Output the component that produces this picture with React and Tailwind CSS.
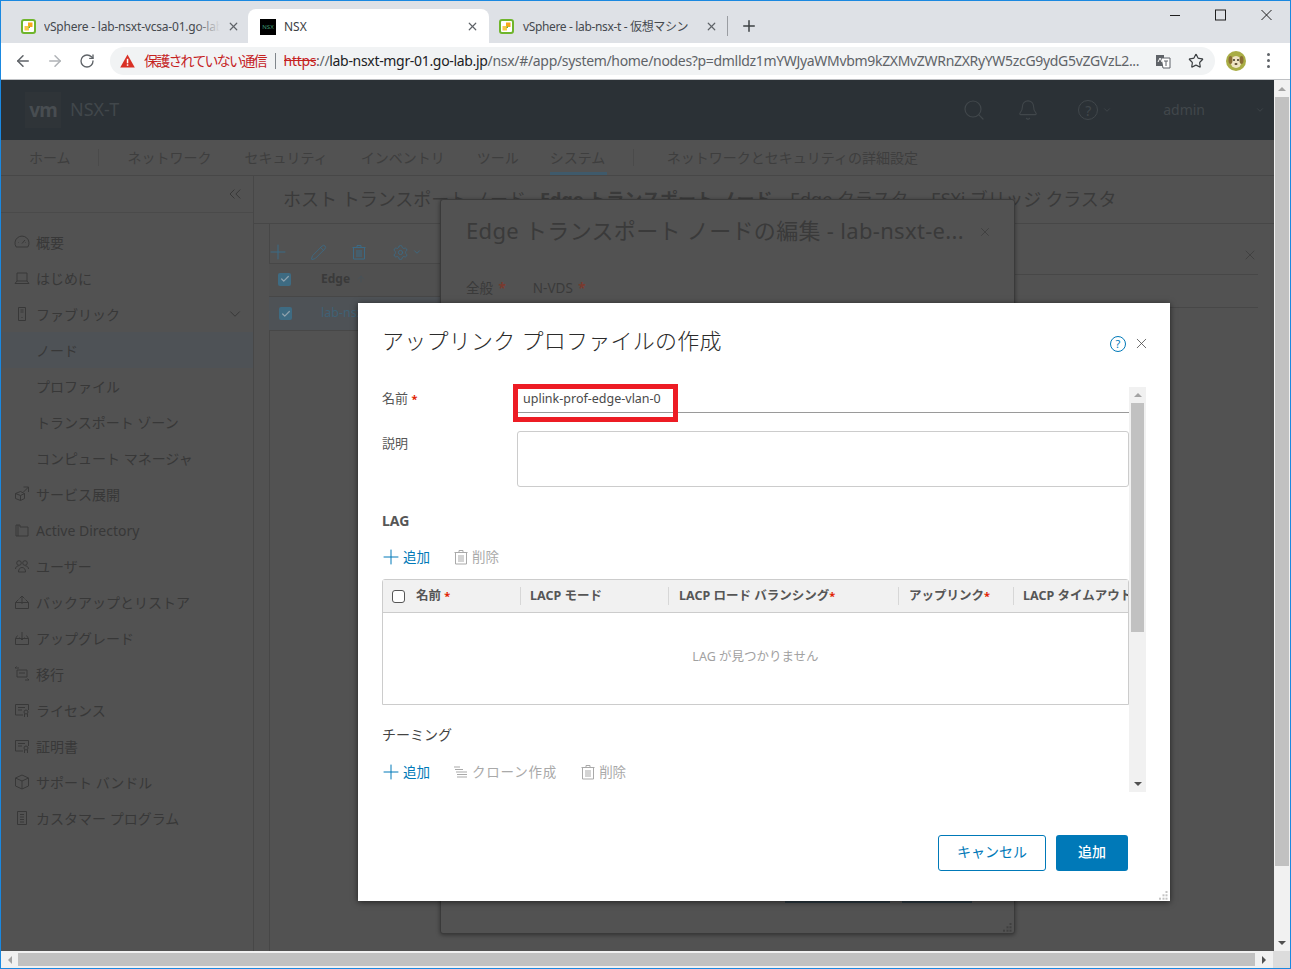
import { ArrowLeft, ArrowRight, RotateCw, Star, Search, Bell, ChevronDown, ChevronsLeft, Plus, Pencil, Settings, ArrowUp, X, Check } from "lucide-react";

const Svg = ({ size = 16, children, className = "" }) => (
  <svg width={size} height={size} viewBox="0 0 16 16" fill="none" stroke="currentColor" strokeWidth="1" className={className}>
    {children}
  </svg>
);

const Trash = ({ className }) => (
  <Svg className={className}>
    <path d="M1.5 3.5h13M6 3.5V1.5h4v2M2.5 3.5v11.5h11V3.5M6 6v7M8 6v7M10 6v7" />
  </Svg>
);

const VSphereIcon = () => (
  <svg width="15" height="15" viewBox="0 0 15 15" className="shrink-0">
    <rect x="1" y="1" width="13" height="13" rx="2" fill="#fff" stroke="#6fb52c" strokeWidth="2" />
    <rect x="7" y="3.5" width="4.5" height="4.5" fill="#f7a81b" />
    <rect x="3.5" y="7" width="4.5" height="4.5" fill="#f7c948" />
    <rect x="7.5" y="7.5" width="1.5" height="1.5" fill="#6fb52c" />
  </svg>
);

const TabClose = () => <X size={13} strokeWidth={2.2} className="text-[#5f6368] shrink-0" />;

const sideItems = [
  { label: "概要", icon: <Svg><path d="M2.2 13a7 7 0 1 1 11.6 0zM8 9.5l3-3.5M4 8.5h.5M11.500 8.500h.5" /></Svg> },
  { label: "はじめに", icon: <Svg><path d="M3 3h10v8H3zM1 13.500h14M1 13.500l2-2.500M15 13.500l-2-2.500" /></Svg> },
  { label: "ファブリック", icon: <Svg><path d="M4.500 1.500h7v13h-7zM6.500 4h3M6.500 6h3M8 11v1" /></Svg>, open: true },
  { label: "ノード", sub: true, active: true },
  { label: "プロファイル", sub: true },
  { label: "トランスポート ゾーン", sub: true },
  { label: "コンピュート マネージャ", sub: true },
  { label: "サービス展開", icon: <Svg><path d="M1.500 7.500l5-2 4 2v5l-4 2-5-2zM1.500 7.500l5 2 4-2M6.500 9.500v5M9.500 1h5v5M14.500 1l-5 5" /></Svg> },
  { label: "Active Directory", icon: <Svg><path d="M2 3h4v2h8v9H2zM4 3v11" /></Svg> },
  { label: "ユーザー", icon: <Svg><circle cx="5" cy="5" r="2.300" /><circle cx="11" cy="5" r="2.300" /><path d="M1.500 11c0-2 1.500-3 3-3M14.500 11c0-2-1.500-3-3-3M4.500 14c0-3 1.500-4.500 3.500-4.500s3.500 1.500 3.500 4.500z" /></Svg> },
  { label: "バックアップとリストア", icon: <Svg><path d="M1.500 8.500h13v6h-13zM1.500 8.500l3-3M14.500 8.500l-3-3M8 10V2M5.500 4.500L8 2l2.500 2.500" /></Svg> },
  { label: "アップグレード", icon: <Svg><path d="M1.500 8.500h13v6h-13zM8 2v8M5.500 7.500L8 10l2.500-2.500M1.500 8.500l2-3M14.500 8.500l-2-3" /></Svg> },
  { label: "移行", icon: <Svg><path d="M3 4h10v7H3zM1 2h4M1 2l1.500-1.500M11 14h4M15 14l-1.500-1.500M5 7h6" /></Svg> },
  { label: "ライセンス", icon: <Svg><path d="M9 13H1.500V2.500h13V8M4 5.500h7M4 8h4" /><circle cx="12" cy="10" r="2" /><path d="M10.500 15v-3M13.500 15v-3" /></Svg> },
  { label: "証明書", icon: <Svg><path d="M9 13H1.500V2.500h13V8M4 5.500h7M4 8h4" /><circle cx="12" cy="10" r="2" /><path d="M10.500 15v-3M13.500 15v-3" /></Svg> },
  { label: "サポート バンドル", icon: <Svg><path d="M8 1l6.500 3v8L8 15l-6.500-3V4zM1.500 4L8 7l6.500-3M8 7v8" /></Svg> },
  { label: "カスタマー プログラム", icon: <Svg><path d="M3.500 1.500h9v13h-9zM6 4.500h4M6 7h4M6 9.500h4M6 12h4" /></Svg> },
];

const Required = () => <span className="text-[#e12200] font-bold text-[11px]">*</span>;

const Action = ({ children, icon, tone = "text-[#a9a9a9]" }) => (
  <div className={`flex items-center gap-[3px] text-[13.5px] ${tone}`}>
    {icon}
    <span>{children}</span>
  </div>
);

const AddAction = () => (
  <Action tone="text-[#0079b8]" icon={<Plus size={24} strokeWidth={1} className="-ml-[4px] -mr-[3px] -my-[2px]" />}>追加</Action>
);

const DeleteAction = () => (
  <Action icon={<Trash />}>削除</Action>
);

const Th = ({ children, className = "" }) => (
  <div className={`flex items-center h-[18px] whitespace-nowrap border-l border-[#d7d7d7] pl-[10px] shrink-0 ${className}`}>
    {children}
  </div>
);

const Grip = ({ tone }) => (
  <svg width="9" height="9" viewBox="0 0 9 9" className={tone} fill="currentColor">
    <rect x="6.500" y="0" width="2" height="2" />
    <rect x="3.500" y="3.300" width="2" height="2" />
    <rect x="6.500" y="3.300" width="2" height="2" />
    <rect x="0" y="6.700" width="2" height="2" />
    <rect x="3.500" y="6.700" width="2" height="2" />
    <rect x="6.500" y="6.700" width="2" height="2" />
  </svg>
);

const Avatar = () => (
  <svg width="20" height="20" viewBox="0 0 20 20" className="shrink-0">
    <circle cx="10" cy="10" r="10" fill="#a9ad45" />
    <ellipse cx="10" cy="11" rx="5.500" ry="6" fill="#efe4c4" />
    <ellipse cx="4.500" cy="9" rx="2" ry="4" fill="#8a6d35" />
    <ellipse cx="15.500" cy="9" rx="2" ry="4" fill="#8a6d35" />
    <circle cx="8" cy="9" r="1" fill="#3a3320" />
    <circle cx="12" cy="9" r="1" fill="#3a3320" />
    <ellipse cx="10" cy="13" rx="1.500" ry="1" fill="#5c4a2a" />
  </svg>
);

export default function App() {
  return (
    <div className="relative w-[1291px] h-[969px] overflow-hidden border border-[#1a88e0] bg-[#525252] flex flex-col font-['Noto_Sans','Noto_Sans_CJK_JP',sans-serif]">
      {/* tab strip */}
      <div className="h-[42px] shrink-0 bg-[#dee1e6] flex items-end pl-[7px] relative text-[12px] text-[#45494e]">
        <div className="w-[240px] h-[34px] flex items-center pl-[13px] pr-[8px] pt-[1px]">
          <VSphereIcon />
          <div className="relative ml-[8px] w-[176px] overflow-hidden whitespace-nowrap tracking-[-0.2px]">
            vSphere - lab-nsxt-vcsa-01.go-lab.jp
            <div className="absolute inset-y-0 right-0 w-[24px] bg-gradient-to-r from-transparent to-[#dee1e6]"></div>
          </div>
          <div className="ml-auto"><TabClose /></div>
        </div>
        <div className="w-[241px] h-[34px] flex items-center pl-[12px] pr-[10px] bg-white rounded-t-lg pt-[1px] text-[#3c4043]">
          <div className="w-[16px] h-[16px] bg-black text-[#3f9a72] text-[6px] leading-[16px] text-center overflow-hidden shrink-0">NSX</div>
          <span className="ml-[8px]">NSX</span>
          <div className="ml-auto"><TabClose /></div>
        </div>
        <div className="w-[238px] h-[34px] flex items-center pl-[10px] pr-[9px] pt-[1px]">
          <VSphereIcon />
          <span className="ml-[9px] whitespace-nowrap tracking-[-0.35px]">vSphere - lab-nsx-t - 仮想マシン</span>
          <div className="ml-auto"><TabClose /></div>
        </div>
        <div className="w-px h-[20px] bg-[#9a9da2] mb-[7px]"></div>
        <Plus size={18} strokeWidth={2} className="text-[#3c4043] ml-[12px] mb-[8px]" />
        <div className="absolute top-[8px] right-[18px] flex items-center gap-[35px] text-[#1f1f1f]">
          <svg width="10" height="12" viewBox="0 0 10 12"><path d="M0 6.500h10" stroke="currentColor" /></svg>
          <svg width="11" height="12" viewBox="0 0 11 12"><rect x="0.500" y="1" width="10" height="10" fill="none" stroke="currentColor" /></svg>
          <svg width="11" height="12" viewBox="0 0 11 12"><path d="M0.500 1l10 10M10.500 1l-10 10" stroke="currentColor" /></svg>
        </div>
      </div>
      {/* toolbar */}
      <div className="h-[37px] shrink-0 bg-white border-b border-[#bfc1c4] flex items-center pb-[1px] text-[#5f6368]">
        <ArrowLeft size={18} strokeWidth={2} className="ml-[13px]" />
        <ArrowRight size={18} strokeWidth={2} className="ml-[14px] text-[#b0b3b7]" />
        <RotateCw size={16} strokeWidth={2} className="ml-[15px]" />
        <div className="ml-[15px] w-[1105px] h-[28px] rounded-full bg-[#f1f3f4] flex items-center pl-[10px] pr-[10px] whitespace-nowrap text-[14px]">
          <svg width="15" height="14" viewBox="0 0 15 14" className="shrink-0">
            <path d="M7.500 0.500L14.800 13.500H0.200z" fill="#d93025" />
            <rect x="6.800" y="4.800" width="1.500" height="4.500" fill="#fff" />
            <rect x="6.800" y="10.300" width="1.500" height="1.500" fill="#fff" />
          </svg>
          <span className="ml-[9px] text-[#c5221f] tracking-[-1.8px]">保護されていない通信</span>
          <span className="w-px h-[16px] bg-[#80868b] ml-[9px] mr-[8px]"></span>
          <span className="w-[858px] overflow-hidden text-[#5f6368] tracking-[-0.32px]">
            <span className="text-[#c5221f] line-through">https</span>://<span className="text-[#202124]">lab-nsxt-mgr-01.go-lab.jp</span>/nsx/#/app/system/home/nodes?p=dmlldz1mYWJyaWMvbm9kZXMvZWRnZXRyYW5zcG9ydG5vZGVzL2...
          </span>
          <svg width="16" height="16" viewBox="0 0 16 16" className="ml-[13px] shrink-0">
            <rect x="1" y="2" width="8" height="11" fill="#5f6368" />
            <path d="M6 5h9v10H8z" fill="#fff" stroke="#5f6368" />
            <path d="M3 9l2-4 2 4" stroke="#fff" fill="none" />
            <path d="M9 8h4M11 8v5" stroke="#5f6368" fill="none" />
          </svg>
          <Star size={16} strokeWidth={1.800} className="ml-[17px] shrink-0 text-[#3c4043]" />
        </div>
        <div className="ml-[11px]"><Avatar /></div>
        <div className="ml-[21px] flex flex-col gap-[3px]">
          <span className="w-[3px] h-[3px] rounded-full bg-[#5f6368]"></span>
          <span className="w-[3px] h-[3px] rounded-full bg-[#5f6368]"></span>
          <span className="w-[3px] h-[3px] rounded-full bg-[#5f6368]"></span>
        </div>
      </div>
      {/* page */}
      <div className="flex-1 min-h-0 flex">
        <div className="flex-1 min-w-0 flex flex-col">
          <div className="h-[60px] shrink-0 bg-[#2b3136] flex items-center text-[#41474b]">
            <div className="ml-[24px] w-[36px] h-[36px] bg-[#2f3438] text-[#484d51] text-[19px] font-bold flex items-center justify-center tracking-[-1px]">vm</div>
            <span className="ml-[9px] text-[18px] pb-[2px]">NSX-T</span>
            <Search size={24} strokeWidth={1.200} className="ml-[843px]" />
            <Bell size={22} strokeWidth={1.200} className="ml-[31px]" />
            <div className="ml-[39px] w-[20px] h-[20px] rounded-full border border-[#41474b] flex items-center justify-center text-[14px]">?</div>
            <ChevronDown size={10} className="ml-[4px]" />
            <span className="ml-[51px] text-[14px] pb-[2px]">admin</span>
            <ChevronDown size={10} className="ml-[50px]" />
          </div>
          <div className="h-[36px] shrink-0 border-b border-[#474747] flex items-center text-[14px] text-[#3e3e3e] whitespace-nowrap">
            <span className="ml-[28px]">ホーム</span>
            <span className="ml-[27px] w-px h-[17px] bg-[#4a4a4a]"></span>
            <span className="ml-[29px]">ネットワーク</span>
            <span className="ml-[33px]">セキュリティ</span>
            <span className="ml-[33px]">インベントリ</span>
            <span className="ml-[32px]">ツール</span>
            <span className="ml-[31px] h-full flex items-center border-b-[3px] border-[#3f5a6b] pt-[3px] w-[57px]">システム</span>
            <span className="ml-[26px] w-px h-[17px] bg-[#4a4a4a]"></span>
            <span className="ml-[33px]">ネットワークとセキュリティの詳細設定</span>
          </div>
          <div className="flex-1 min-h-0 flex">
            <div className="w-[253px] shrink-0 border-r border-[#474747] text-[#383838]">
              <div className="h-[37px] border-b border-[#4a4a4a] flex items-center justify-end pr-[8px]">
                <ChevronsLeft size={20} strokeWidth={1.200} />
              </div>
              <div className="pt-[11px] text-[14px]">
                {sideItems.map((item) => (
                  <div key={item.label} className={`h-[36px] flex items-center ${item.active ? "bg-[#4e5256]" : ""} ${item.sub ? "pl-[35px]" : "pl-[13px]"}`}>
                    {item.icon}
                    <span className={item.icon ? "ml-[6px]" : ""}>{item.label}</span>
                    {item.open && <ChevronDown size={18} strokeWidth={1.300} className="ml-auto mr-[9px]" />}
                  </div>
                ))}
              </div>
            </div>
            <div className="flex-1 min-w-0 text-[#3a3a3a]">
              <div className="h-[48px] border-b border-[#474747] flex items-center text-[18px] whitespace-nowrap pl-[29px]">
                <span className="w-[257px]">ホスト トランスポート ノード</span>
                <span className="w-[250px] font-bold">Edge トランスポート ノード</span>
                <span className="w-[141px]">Edge クラスタ</span>
                <span className="tracking-[-0.2px]">ESXi ブリッジ クラスタ</span>
              </div>
              <div className="flex h-[728px] ml-[15px] border-l border-[#474747] pl-0">
                <div className="w-[171px] -ml-px">
                  <div className="h-[39px] flex items-center pt-[17px] text-[#3b6a85] gap-[24px]">
                    <Plus size={24} strokeWidth={1} className="-mx-[3.5px]" />
                    <Pencil size={17} strokeWidth={1.200} />
                    <Trash />
                    <div className="flex items-center gap-[3px] ml-[1px]">
                      <Settings size={17} strokeWidth={1.200} />
                      <ChevronDown size={10} />
                    </div>
                  </div>
                  <div className="h-[34px] border-y border-[#474747] bg-[#505050] flex items-center pl-[9px] pb-[2px] font-bold text-[12px]">
                    <div className="w-[13px] h-[13px] bg-[#3e6b82] rounded-[2px] flex items-center justify-center text-[#90a2ad] mr-[30px]"><Check size={10} strokeWidth={3} /></div>
                    Edge
                    <ArrowUp size={10} className="ml-[6px] text-[#46525a]" />
                  </div>
                  <div className="h-[34px] border-b border-[#474747] bg-[#4e5256] flex items-center pl-[10px] text-[12.500px] text-[#3f6175]">
                    <div className="w-[13px] h-[13px] bg-[#3e6b82] rounded-[2px] flex items-center justify-center text-[#90a2ad] mr-[29px]"><Check size={10} strokeWidth={3} /></div>
                    lab-nsxt
                  </div>
                </div>
                <div className="ml-auto mr-[16px] w-[243px]">
                  <div className="h-[51px] border-b border-[#474747] flex items-center justify-end pt-[12px]">
                    <X size={16} strokeWidth={1} />
                  </div>
                  <div className="h-[33px] border-b border-[#474747]"></div>
                </div>
              </div>
            </div>
          </div>
        </div>
        {/* vertical scrollbar */}
        <div className="w-[16px] shrink-0 bg-[#f1f1f1] flex flex-col items-center">
          <div className="h-[17px] flex items-center"><div className="border-x-[4px] border-x-transparent border-b-[4px] border-b-[#a3a3a3]"></div></div>
          <div className="w-[14px] h-[769px] bg-[#c1c1c1]"></div>
          <div className="mt-auto h-[17px] flex items-center"><div className="border-x-[4px] border-x-transparent border-t-[4px] border-t-[#505050]"></div></div>
        </div>
      </div>
      {/* horizontal scrollbar */}
      <div className="h-[17px] shrink-0 bg-[#f1f1f1] flex items-center">
        <div className="w-[17px] flex justify-center"><div className="border-y-[4px] border-y-transparent border-r-[4px] border-r-[#a3a3a3]"></div></div>
        <div className="w-[1237px] h-[13px] bg-[#c1c1c1]"></div>
        <div className="w-[18px] flex justify-center"><div className="border-y-[4px] border-y-transparent border-l-[4px] border-l-[#505050]"></div></div>
        <div className="ml-auto w-[17px] h-full bg-[#dcdcdc]"></div>
      </div>

      {/* edit modal behind */}
      <div className="absolute left-[439px] top-[198px] w-[575px] h-[735px] bg-[#525252] border border-[#3a3a3a] rounded-[3px] shadow-[0_1px_4px_rgba(0,0,0,0.4)] text-[#3a3a3a]">
        <div className="flex items-center pl-[25px] pt-[14px] text-[22px] whitespace-nowrap">
          <span className="tracking-[0.32px]">Edge トランスポート ノードの編集 - lab-nsxt-e...</span>
          <X size={14} strokeWidth={1.200} className="ml-[14px] mt-[2px]" />
        </div>
        <div className="flex items-center pl-[25px] mt-[31px] text-[13.500px] gap-[27px]">
          <span>全般 <span className="text-[#7a3a2e] font-bold ml-[2px]">*</span></span>
          <span>N-VDS <span className="text-[#7a3a2e] font-bold ml-[2px]">*</span></span>
        </div>
        <div className="absolute left-[344px] bottom-[30px] flex gap-[12px]">
          <div className="w-[105px] h-[2px] bg-[#2c3a42]"></div>
          <div className="w-[70px] h-[2px] bg-[#2c3a42]"></div>
        </div>
        <div className="absolute right-[2px] bottom-[1px]"><Grip tone="text-[#404040]" /></div>
      </div>

      {/* uplink profile modal */}
      <div className="absolute left-[357px] top-[302px] w-[812px] h-[598px] bg-white shadow-[0_1px_6px_rgba(0,0,0,0.6)] flex flex-col text-[#565656]">
        <div className="h-[84px] shrink-0 flex items-center pl-[24px] pr-[20px] pb-[9px]">
          <span className="text-[22px] text-[#2b2b2b] font-light tracking-[0.25px]">アップリンク プロファイルの作成</span>
          <div className="ml-auto flex items-center gap-[7px] mt-[6px]">
            <div className="w-[16px] h-[16px] rounded-full border border-[#0079b8] text-[#0079b8] text-[11px] leading-none flex items-center justify-center">?</div>
            <X size={17} strokeWidth={1.100} className="text-[#444]" />
          </div>
        </div>
        <div className="h-[405px] shrink-0 ml-[24px] mr-[24px] flex">
          <div className="w-[747px] overflow-hidden">
            <div className="flex text-[13px] h-[26px]">
              <div className="w-[135px] pt-[2px]">名前 <Required /></div>
              <div className="flex-1 h-[26px] border-b border-[#9a9a9a] pl-[6px] text-[12.500px] text-[#4a4a4a] pt-[3px]">uplink-prof-edge-vlan-0</div>
            </div>
            <div className="flex text-[13px] mt-[18px]">
              <div className="w-[135px] pt-[3px]">説明</div>
              <div className="flex-1 h-[56px] border border-[#cccccc] rounded-[3px]"></div>
            </div>
            <div className="text-[14px] font-bold mt-[23px]">LAG</div>
            <div className="flex items-center gap-[23px] mt-[16px] ml-[1px] h-[20px]">
              <AddAction />
              <DeleteAction />
            </div>
            <div className="mt-[12px] h-[126px] border border-[#cccccc] rounded-t-[3px] flex flex-col">
              <div className="h-[33px] shrink-0 bg-[#f1f1f1] border-b border-[#cccccc] flex items-center text-[12.500px] font-bold overflow-hidden">
                <div className="w-[13px] h-[13px] border border-[#565656] rounded-[3px] bg-white ml-[9px] mr-[11px] shrink-0"></div>
                <span className="w-[104px] shrink-0">名前 <Required /></span>
                <Th className="w-[148px] !pl-[9px]">LACP モード</Th>
                <Th className="w-[230px]">LACP ロード バランシング<Required /></Th>
                <Th className="w-[115px]">アップリンク <Required /></Th>
                <Th className="w-[130px] !pl-[9px]">LACP タイムアウト</Th>
              </div>
              <div className="flex-1 flex items-center justify-center text-[12.500px] text-[#a1a1a1] pb-[2px]">LAG が見つかりません</div>
            </div>
            <div className="text-[14px] mt-[19px] text-[#444]">チーミング</div>
            <div className="flex items-center gap-[23px] mt-[17px] ml-[1px] h-[20px]">
              <AddAction />
              <Action icon={<Svg><path d="M1 3h6M2 5.500h8M3 8h11M4 10.500h10M4 13h10" /></Svg>}><span className="tracking-[0.8px]">クローン作成</span></Action>
              <DeleteAction />
            </div>
          </div>
          <div className="w-[17px] shrink-0 bg-[#f1f1f1] flex flex-col items-center">
            <div className="h-[16px] flex items-center"><div className="border-x-[4px] border-x-transparent border-b-[4px] border-b-[#a3a3a3]"></div></div>
            <div className="w-[13px] h-[229px] bg-[#c1c1c1]"></div>
            <div className="mt-auto h-[16px] flex items-center"><div className="border-x-[4px] border-x-transparent border-t-[4px] border-t-[#505050]"></div></div>
          </div>
        </div>
        <div className="flex justify-end gap-[10px] pr-[42px] pt-[43px] text-[14px]">
          <button className="w-[108px] h-[36px] border border-[#0079b8] rounded-[3px] text-[#0079b8] pb-[4px]">キャンセル</button>
          <button className="w-[72px] h-[36px] bg-[#0079b8] rounded-[3px] text-white font-medium pb-[4px]">追加</button>
        </div>
        <div className="absolute right-[2px] bottom-[1px]"><Grip tone="text-[#c4c4c4]" /></div>
      </div>

      {/* red annotation box */}
      <div className="absolute left-[512px] top-[383px] w-[165px] h-[38px] border-[5px] border-[#ed1c24]"></div>
    </div>
  );
}
